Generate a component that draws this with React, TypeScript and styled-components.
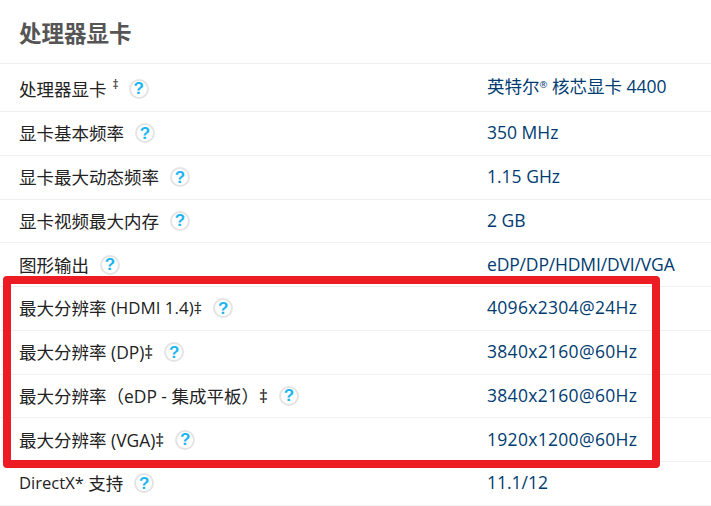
import React from "react";
import styled, { createGlobalStyle } from "styled-components";

const Global = createGlobalStyle`
  html, body { margin: 0; padding: 0; background: #fff; overflow: hidden; }
  body { font-family: "Open Sans", "Noto Sans CJK SC", sans-serif; }
`;

const Page = styled.main`
  position: relative;
  width: 711px;
  height: 506px;
  overflow: hidden;
`;

const Heading = styled.h2`
  margin: 0;
  height: 64px;
  box-sizing: border-box;
  padding: 18px 0 0 19px;
  font-size: 22.5px;
  line-height: 32px;
  font-weight: 700;
  color: #555;
  border-bottom: 1px solid #f0f0f0;
`;

const Row = styled.div<{ $first?: boolean }>`
  display: grid;
  grid-template-columns: 468px 1fr;
  align-items: center;
  box-sizing: border-box;
  height: ${(p) => (p.$first ? "48px" : "43.75px")};
  padding-left: 19px;
  border-bottom: 1px solid #f0f0f0;
  font-size: 17.5px;
  line-height: 24px;
`;

const Label = styled.div<{ $first?: boolean }>`
  display: flex;
  align-items: center;
  color: #222;
  white-space: pre;
  padding-top: ${(p) => (p.$first ? "2px" : "0")};
`;

const Latin = styled.span<{ $size?: number }>`
  font-size: ${(p) => p.$size ?? 17.4}px;
`;

const Dagger = styled.sup`
  font-size: 12px;
  line-height: 1;
  margin-left: 6px;
  align-self: flex-start;
  margin-top: 2px;
`;

const Value = styled.div<{ $tracking: number; $first?: boolean }>`
  color: #003c71;
  white-space: pre;
  letter-spacing: ${(p) => p.$tracking}px;
  padding-bottom: ${(p) => (p.$first ? "4px" : "2px")};
`;

const Reg = styled.span`
  font-size: 9.5px;
  line-height: 1;
  vertical-align: 5px;
`;

const Help = styled.span<{ $gap: number }>`
  display: inline-flex;
  align-items: center;
  justify-content: center;
  box-sizing: border-box;
  flex: none;
  width: 20px;
  height: 20px;
  margin-left: ${(p) => p.$gap}px;
  border: 2px solid #e4e4e4;
  border-radius: 50%;
  color: #1cb5f1;
  font-family: "Liberation Sans", sans-serif;
  font-size: 17px;
  font-weight: 700;
  line-height: 1;
`;

const Highlight = styled.div`
  position: absolute;
  left: 3px;
  top: 276px;
  width: 657px;
  height: 192px;
  box-sizing: border-box;
  border: 8px solid #ed1c24;
  border-radius: 4px;
  pointer-events: none;
`;

type Spec = {
  key: string;
  label: React.ReactNode;
  value: React.ReactNode;
  tracking?: number;
  gap?: number;
};

const rows: Spec[] = [
  {
    key: "gfx",
    label: (
      <>
        处理器显卡<Dagger>‡</Dagger>
      </>
    ),
    value: (
      <>
        英特尔<Reg>®</Reg> 核芯显卡 4400
      </>
    ),
    gap: 10,
  },
  { key: "base", label: "显卡基本频率", value: "350 MHz" },
  { key: "max", label: "显卡最大动态频率", value: "1.15 GHz" },
  { key: "mem", label: "显卡视频最大内存", value: "2 GB" },
  { key: "out", label: "图形输出", value: "eDP/DP/HDMI/DVI/VGA", tracking: -0.15 },
  {
    key: "hdmi",
    label: (
      <>
        最大分辨率<Latin $size={16.9}> (HDMI 1.4)‡</Latin>
      </>
    ),
    value: "4096x2304@24Hz",
    tracking: 0.3,
  },
  {
    key: "dp",
    label: (
      <>
        最大分辨率<Latin> (DP)‡</Latin>
      </>
    ),
    value: "3840x2160@60Hz",
    tracking: 0.3,
  },
  {
    key: "edp",
    label: (
      <>
        最大分辨率（<Latin>eDP - </Latin>集成平板）<Latin>‡</Latin>
      </>
    ),
    value: "3840x2160@60Hz",
    tracking: 0.3,
  },
  {
    key: "vga",
    label: (
      <>
        最大分辨率<Latin> (VGA)‡</Latin>
      </>
    ),
    value: "1920x1200@60Hz",
    tracking: 0.3,
  },
  {
    key: "dx",
    label: (
      <>
        <Latin $size={16.6}>DirectX* </Latin>支持
      </>
    ),
    value: "11.1/12",
  },
];

export default function App() {
  return (
    <Page>
      <Global />
      <Heading>处理器显卡</Heading>
      {rows.map((r, i) => (
        <Row key={r.key} $first={i === 0}>
          <Label $first={i === 0}>
            {r.label}
            <Help $gap={r.gap ?? 11}>?</Help>
          </Label>
          <Value $tracking={r.tracking ?? 0} $first={i === 0}>
            {r.value}
          </Value>
        </Row>
      ))}
      <Highlight />
    </Page>
  );
}
